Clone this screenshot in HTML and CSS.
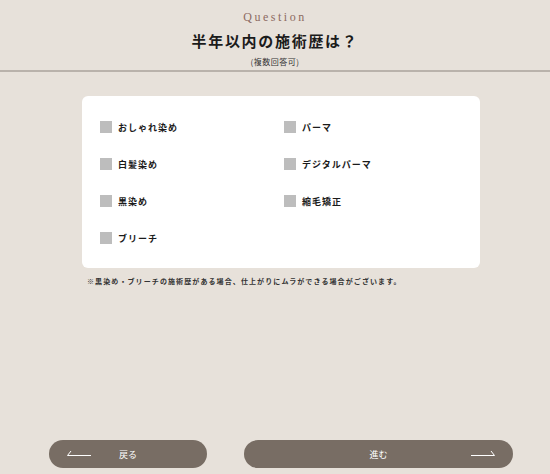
FILE: index.html
```html
<!DOCTYPE html>
<html lang="ja">
<head>
    <meta charset="UTF-8">
    <meta name="viewport" content="width=device-width, initial-scale=1.0">
    <title>Question</title>
    <link rel="stylesheet" href="styles.css">
</head>
<body>

    <div class="header">
        <p class="label">Question</p>
        <h1>半年以内の施術歴は？</h1>
        <p class="sub">(複数回答可)</p>
    </div>

    <div class="card">
        <div class="choices">
            <label class="choice"><span class="box"></span>おしゃれ染め</label>
            <label class="choice"><span class="box"></span>パーマ</label>
            <label class="choice"><span class="box"></span>白髪染め</label>
            <label class="choice"><span class="box"></span>デジタルパーマ</label>
            <label class="choice"><span class="box"></span>黒染め</label>
            <label class="choice"><span class="box"></span>縮毛矯正</label>
            <label class="choice"><span class="box"></span>ブリーチ</label>
        </div>
    </div>

    <p class="note">※黒染め・ブリーチの施術歴がある場合、仕上がりにムラができる場合がございます。</p>

    <div class="buttons">
        <a class="btn back" href="#">
            <svg class="arrow left" width="24" height="6" viewBox="0 0 24 6"><path d="M24 5.5H0.5L4 1" fill="none" stroke="#fff" stroke-width="1"/></svg>
            <span>戻る</span>
        </a>
        <a class="btn next" href="#">
            <span>進む</span>
            <svg class="arrow right" width="24" height="6" viewBox="0 0 24 6"><path d="M0 5.5H23.5L20 1" fill="none" stroke="#fff" stroke-width="1"/></svg>
        </a>
    </div>

</body>
</html>
```

FILE: styles.css
```css
body {
    font-family: "Noto Sans CJK JP", "Noto Sans", sans-serif;
    margin: 0;
    padding: 0;
    background-color: #e7e1da;
    color: #1b1b1b;
    height: 474px;
    display: flex;
    flex-direction: column;
    overflow: hidden;
}

.header {
    text-align: center;
    border-bottom: 2px solid #b9b2ab;
    padding: 9px 0 3px;
}

.header .label {
    font-family: "Liberation Serif", serif;
    font-size: 12px;
    letter-spacing: 2.5px;
    color: #8d6b62;
    margin: 0;
    line-height: 16px;
}

.header h1 {
    font-size: 15px;
    font-weight: bold;
    letter-spacing: 1.7px;
    margin: 0;
    line-height: 32px;
}

.header .sub {
    font-size: 8px;
    letter-spacing: 0.5px;
    margin: 0;
    line-height: 10px;
    color: #333;
}

.card {
    background-color: #fff;
    border-radius: 6px;
    margin: 24px 0 0 82px;
    width: 398px;
    height: 172px;
    box-sizing: border-box;
    padding: 25px 0 0 18px;
}

.choices {
    display: grid;
    grid-template-columns: 184px 184px;
    row-gap: 25px;
}

.choice {
    display: flex;
    align-items: center;
    font-size: 9px;
    font-weight: bold;
    letter-spacing: 1px;
    height: 12px;
    cursor: pointer;
}

.box {
    width: 12px;
    height: 12px;
    background-color: #bdbdbd;
    margin-right: 6px;
}

.note {
    font-size: 7px;
    font-weight: bold;
    letter-spacing: 1.1px;
    color: #333;
    margin: 8px 0 0 87px;
}

.buttons {
    margin-top: auto;
    display: flex;
    padding: 0 37px 6px 49px;
    gap: 37px;
}

.btn {
    height: 28px;
    border-radius: 14px;
    background-color: #786d64;
    color: #fff;
    text-decoration: none;
    font-size: 9px;
    display: flex;
    align-items: center;
    position: relative;
    justify-content: center;
}

.btn.back {
    width: 158px;
}

.btn.next {
    flex: 1;
}

.arrow {
    position: absolute;
    top: 10px;
}

.arrow.left {
    left: 18px;
}

.arrow.right {
    right: 18px;
}
```
